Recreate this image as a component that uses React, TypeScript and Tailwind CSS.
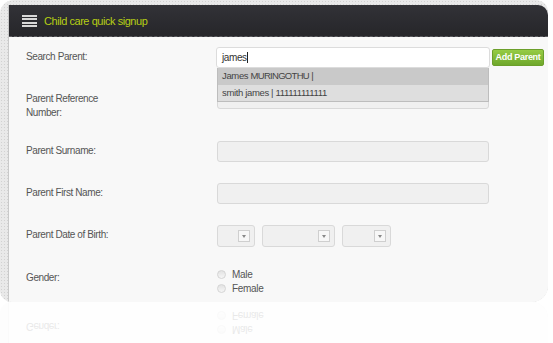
import React from "react";

const font = { fontFamily: '"Liberation Sans", Arial, sans-serif' };

function Field({ label, children }: { label: React.ReactNode; children: React.ReactNode }) {
  return (
    <div className="flex items-start">
      <div className="w-[191px] shrink-0 mt-[3px] text-[10px] leading-[14px] text-[#555] tracking-[-0.4px]">
        {label}
      </div>
      {children}
    </div>
  );
}

function TextBox() {
  return <div className="w-[272px] h-[21px] rounded-[3px] border border-[#d9d9d9] bg-[#f0f0f0]" />;
}

function Select({ w }: { w: string }) {
  return (
    <div className={`${w} h-[22px] rounded-[3px] border border-[#d9d9d9] bg-[#f0f0f0] flex items-center justify-end pr-[4px]`}>
      <div className="w-[12px] h-[12px] border border-[#cfcfcf] bg-[#f7f7f7] flex items-center justify-center">
        <div className="w-0 h-0 border-l-[2.5px] border-r-[2.5px] border-t-[3px] border-l-transparent border-r-transparent border-t-[#888]" />
      </div>
    </div>
  );
}

function Radio({ label }: { label: string }) {
  return (
    <div className="flex items-center h-[14px]">
      <div className="w-[9px] h-[9px] rounded-full border border-[#d4d4d4] bg-gradient-to-b from-[#e2e2e2] to-[#f6f6f6]" />
      <span className="ml-[6px] text-[10px] text-[#555] tracking-[-0.3px]">{label}</span>
    </div>
  );
}

function GenderRow() {
  return (
    <Field label="Gender:">
      <div className="-mt-[1px] flex flex-col">
        <Radio label="Male" />
        <Radio label="Female" />
      </div>
    </Field>
  );
}

export default function App() {
  return (
    <div className="w-[553px] h-[343px] bg-white overflow-hidden" style={font}>
      {/* framed screenshot */}
      <div className="w-[548px] h-[302px] rounded-tl-[14px] rounded-tr-[12px] rounded-br-[16px] rounded-bl-[12px] overflow-hidden bg-[#e9e9e9] bg-[radial-gradient(#d2d2d2_0.8px,transparent_0.8px)] bg-[length:3px_3px] pl-[8px] pt-[5px] flex">
        <div className="flex-1 flex flex-col border-l border-[#c9c9c9]">
          <div className="h-[32px] shrink-0 rounded-tr-[10px] bg-gradient-to-b from-[#323237] to-[#26262a] border-b border-dashed border-[#5c5c60] flex items-center pl-[13px] pt-[1px]">
            <div className="flex flex-col gap-[1.5px]">
              <div className="w-[15px] h-[2px] bg-[#d8d8d8]" />
              <div className="w-[15px] h-[2px] bg-[#d8d8d8]" />
              <div className="w-[15px] h-[2px] bg-[#d8d8d8]" />
              <div className="w-[15px] h-[2px] bg-[#d8d8d8]" />
            </div>
            <span className="ml-[7px] text-[11px] text-[#b6ce14] tracking-[-0.45px]">Child care quick signup</span>
          </div>
          <div className="flex-1 bg-[#f8f8f8] pt-[10px] pl-[17px] flex flex-col gap-[21px]">
            <div className="relative">
              <Field label="Search Parent:">
                <div className="-ml-[1px] w-[274px] h-[21px] rounded-[3px] border border-[#dcdcdc] bg-white flex items-center pl-[5px]">
                  <span className="text-[10px] text-[#333] tracking-[-0.4px]">james</span>
                  <span className="w-px h-[11px] bg-[#222]" />
                </div>
                <button className="ml-[2px] mt-[2px] w-[52px] h-[17px] rounded-[2px] border border-[#6c9f2b] bg-gradient-to-b from-[#96cc45] to-[#6fa82c] text-white text-[9px] font-bold tracking-[-0.3px] flex items-center justify-center">
                  Add Parent
                </button>
              </Field>
              <div className="absolute left-[191px] top-[21px] w-[272px] z-10 border border-[#bdbdbd] border-t-0 text-[9.5px] text-[#444] tracking-[-0.35px]">
                <div className="h-[17px] bg-[#c9c9c9] flex items-center pl-[4px]">
                  <span>James <span className="tracking-[-0.7px]">MURINGOTHU</span> |</span>
                </div>
                <div className="h-[16px] bg-[#dedede] flex items-center pl-[4px]">smith james | 111111111111</div>
              </div>
            </div>
            <Field label={<>Parent Reference<br />Number:</>}>
              <div className="w-[272px] h-[20px] rounded-[3px] border border-[#d9d9d9] bg-[#f0f0f0]" />
            </Field>
            <Field label="Parent Surname:">
              <TextBox />
            </Field>
            <Field label="Parent First Name:">
              <TextBox />
            </Field>
            <Field label="Parent Date of Birth:">
              <div className="flex gap-[7px]">
                <Select w="w-[38px]" />
                <Select w="w-[73px]" />
                <Select w="w-[49px]" />
              </div>
            </Field>
            <GenderRow />
          </div>
        </div>
      </div>
      {/* reflection */}
      <div className="w-[548px] h-[41px] -scale-y-100 opacity-[0.13] overflow-hidden rounded-bl-[12px] rounded-br-[16px] bg-[#f0f0f0] pl-[8px]">
        <div className="h-full border-l border-[#dcdcdc] bg-[#f8f8f8] pl-[17px] flex flex-col justify-end pb-[7px]">
          <GenderRow />
        </div>
      </div>
    </div>
  );
}
